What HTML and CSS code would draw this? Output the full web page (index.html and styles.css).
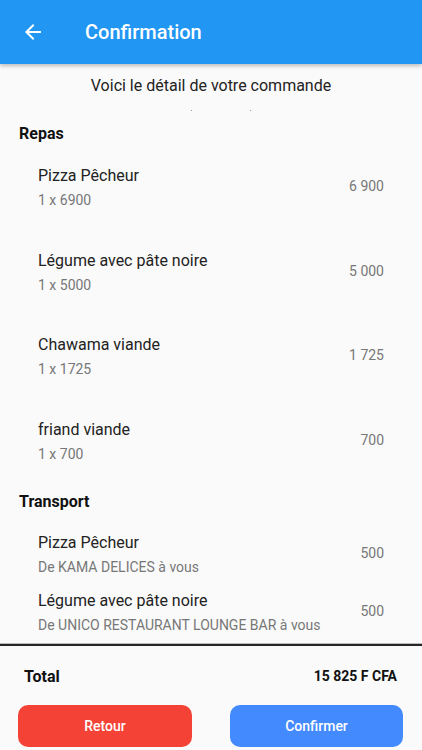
FILE: index.html
```html
<!DOCTYPE html>
<html lang="fr"><head>
  <meta charset="utf-8">
  <title>Confirmation</title>
  <link rel="stylesheet" href="styles.css">
</head>
<body>

<header class="appbar">
  <svg class="back" viewBox="0 0 24 24" width="24" height="24"><path d="M20 11H7.83l5.59-5.59L12 4l-8 8 8 8 1.41-1.41L7.83 13H20v-2z" fill="#fff"/></svg>
  <h1>Confirmation</h1>
</header>

<main class="content">
  <p class="intro">Voici le détail de votre commande</p>
  <div class="dots"><i></i><i></i></div>

  <h2>Repas</h2>
  <div class="list meals">
    <div class="item"><div><div class="name">Pizza Pêcheur</div><div class="sub">1 x 6900</div></div><span class="price">6 900</span></div>
    <div class="item"><div><div class="name">Légume avec pâte noire</div><div class="sub">1 x 5000</div></div><span class="price">5 000</span></div>
    <div class="item"><div><div class="name">Chawama viande</div><div class="sub">1 x 1725</div></div><span class="price">1 725</span></div>
    <div class="item"><div><div class="name">friand viande</div><div class="sub">1 x 700</div></div><span class="price">700</span></div>
  </div>

  <h2 class="transport">Transport</h2>
  <div class="list trips">
    <div class="item"><div><div class="name">Pizza Pêcheur</div><div class="sub">De KAMA DELICES à vous</div></div><span class="price">500</span></div>
    <div class="item"><div><div class="name">Légume avec pâte noire</div><div class="sub">De UNICO RESTAURANT LOUNGE BAR à vous</div></div><span class="price">500</span></div>
  </div>
</main>

<footer class="bottom">
  <div class="total"><span>Total</span><span class="amount">15 825 F CFA</span></div>
  <div class="actions">
    <button class="btn red">Retour</button>
    <button class="btn blue">Confirmer</button>
  </div>
</footer>

</body></html>
```

FILE: styles.css
```css
html, body { margin: 0; padding: 0; }
body {
  width: 422px;
  height: 750px;
  overflow: hidden;
  background: #fafafa;
  color: #212121;
  font-family: Roboto, "Liberation Sans", sans-serif;
  display: flex;
  flex-direction: column;
}

.appbar {
  height: 64px;
  flex: none;
  background: #2196f3;
  display: flex;
  align-items: center;
  padding-left: 21px;
  box-shadow: 0 2px 4px rgba(0,0,0,0.25);
  position: relative;
  z-index: 1;
}
.appbar h1 {
  margin: 0 0 0 40px;
  color: #fff;
  font-size: 20px;
  font-weight: 500;
}

.content {
  height: 580px;
  flex: none;
  overflow: hidden;
}

.intro {
  margin: 12px 0 0;
  text-align: center;
  font-size: 16px;
  line-height: 20px;
  color: #222;
}
.dots {
  display: flex;
  justify-content: center;
  gap: 58px;
  margin-top: 14px;
  height: 2px;
  padding-left: 19px;
}
.dots i {
  width: 1px;
  height: 1px;
  background: #999;
}

h2 {
  margin: 10px 0 0 19px;
  font-size: 16px;
  font-weight: 700;
  line-height: 24px;
  color: #111;
}
h2.transport { margin-top: 24px; }

.list {
  display: flex;
  flex-direction: column;
  padding: 0 38px;
}
.meals { gap: 36.5px; margin-top: 18px; }
.trips { gap: 10px; margin-top: 17px; }

.item {
  display: flex;
  justify-content: space-between;
  align-items: center;
}
.name {
  font-size: 16px;
  line-height: 24px;
  color: #222;
}
.sub {
  font-size: 14px;
  line-height: 24px;
  color: #777;
}
.price {
  font-size: 14px;
  color: #777;
  margin-bottom: 4px;
}

.bottom {
  border-top: 2px solid #262626;
  box-shadow: 0 -1px 0 #bbb, 0 1px 0 #bbb;
  flex: 1;
}
.total {
  display: flex;
  justify-content: space-between;
  align-items: center;
  padding: 0 25px 0 24px;
  margin-top: 18px;
  height: 24px;
}
.total span {
  font-weight: 700;
  font-size: 16px;
  color: #111;
}
.total .amount { font-size: 14px; }

.actions {
  display: flex;
  justify-content: space-between;
  padding: 0 19px 0 18px;
  margin-top: 17px;
}
.btn {
  width: 174px;
  height: 42px;
  border: none;
  border-radius: 10px;
  color: #fff;
  font-family: Roboto, "Liberation Sans", sans-serif;
  font-size: 14px;
  font-weight: 500;
}
.btn.red { background: #f44336; }
.btn.blue { background: #448aff; width: 173px; }
```
